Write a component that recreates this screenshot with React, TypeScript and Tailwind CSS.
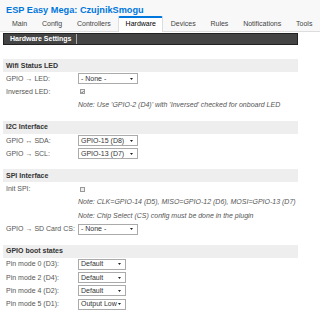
import React from "react";

const tabs = ["Main", "Config", "Controllers", "Hardware", "Devices", "Rules", "Notifications", "Tools"];

function Select({ value, w }: { value: string; w: string }) {
  return (
    <div className={`flex h-[11px] items-center justify-between border border-[#aaa] bg-white pl-[2px] pr-[4px] text-[#333] ${w}`}>
      <span>{value}</span>
      <svg width="3" height="2" viewBox="0 0 3 2">
        <path d="M0 0h3L1.5 2z" fill="#222" />
      </svg>
    </div>
  );
}

function Check({ on }: { on?: boolean }) {
  return (
    <div className="ml-[2px] flex h-[5px] w-[5px] items-center justify-center border border-[#999] bg-[#eee]">
      {on && (
        <svg width="4" height="4" viewBox="0 0 4 4">
          <path d="M0.5 2l1 1 2-2.2" stroke="#333" strokeWidth="0.9" fill="none" />
        </svg>
      )}
    </div>
  );
}

function Row({ label, children }: { label?: string; children?: React.ReactNode }) {
  return (
    <div className="flex h-[13.3px] items-center">
      <div className="w-[75px] shrink-0 pl-[3px] text-[#555]">{label}</div>
      <div className="flex items-center">{children}</div>
    </div>
  );
}

function Note({ children }: { children: React.ReactNode }) {
  return <span className="italic text-[#555]">{children}</span>;
}

function Section({ title, children, first }: { title: string; children: React.ReactNode; first?: boolean }) {
  return (
    <div className={first ? "mt-[14px]" : "mt-[9px]"}>
      <div className="flex h-[13px] items-center bg-[#eee] pl-[3px] font-bold text-[#333]">{title}</div>
      {children}
    </div>
  );
}

export default function App() {
  return (
    <div className="h-[313px] w-[320px] overflow-hidden bg-white font-['Liberation_Sans',Arial,sans-serif] text-[7px] leading-[8px]">
      <header className="border-b border-[#ddd] bg-[#f8f8f8] pt-[5px]">
        <h1 className="pl-[6px] text-[9.2px] font-bold leading-[11px] text-[#0077dd]">ESP Easy Mega: CzujnikSmogu</h1>
        <nav className="-mb-px flex pl-[4.6px]">
          {tabs.map((t) => (
            <div
              key={t}
              className={
                t === "Hardware"
                  ? "rounded-t-[2px] border-x border-t-2 border-x-[#ddd] border-t-[#0077dd] bg-white px-[6.4px] pb-[4px] pt-[2px] text-black"
                  : "border-x border-t-2 border-transparent px-[6.4px] pb-[4px] pt-[2px] text-[#444]"
              }
            >
              {t}
            </div>
          ))}
        </nav>
      </header>

      <div className="ml-[3px] w-[295px]">
        <div className="mt-[1px] flex h-[12px] border border-[#222] bg-[#444] font-bold text-white">
          <div className="flex w-[73px] items-center border-r border-[#aaa] pl-[6px]">Hardware Settings</div>
          <div className="flex-1" />
        </div>

        <Section title="Wifi Status LED" first>
          <Row label="GPIO → LED:">
            <Select value="- None -" w="w-[60px]" />
          </Row>
          <Row label="Inversed LED:">
            <Check on />
          </Row>
          <Row>
            <Note>Note: Use 'GPIO-2 (D4)' with 'Inversed' checked for onboard LED</Note>
          </Row>
        </Section>

        <Section title="I2C Interface">
          <Row label="GPIO ↔ SDA:">
            <Select value="GPIO-15 (D8)" w="w-[60px]" />
          </Row>
          <Row label="GPIO → SCL:">
            <Select value="GPIO-13 (D7)" w="w-[60px]" />
          </Row>
        </Section>

        <Section title="SPI Interface">
          <Row label="Init SPI:">
            <Check />
          </Row>
          <Row>
            <Note>Note: CLK=GPIO-14 (D5), MISO=GPIO-12 (D6), MOSI=GPIO-13 (D7)</Note>
          </Row>
          <Row>
            <Note>Note: Chip Select (CS) config must be done in the plugin</Note>
          </Row>
          <Row label="GPIO → SD Card CS:">
            <Select value="- None -" w="w-[60px]" />
          </Row>
        </Section>

        <Section title="GPIO boot states">
          <Row label="Pin mode 0 (D3):">
            <Select value="Default" w="w-[48px]" />
          </Row>
          <Row label="Pin mode 2 (D4):">
            <Select value="Default" w="w-[48px]" />
          </Row>
          <Row label="Pin mode 4 (D2):">
            <Select value="Default" w="w-[48px]" />
          </Row>
          <Row label="Pin mode 5 (D1):">
            <Select value="Output Low" w="w-[48px]" />
          </Row>
        </Section>
      </div>
    </div>
  );
}
